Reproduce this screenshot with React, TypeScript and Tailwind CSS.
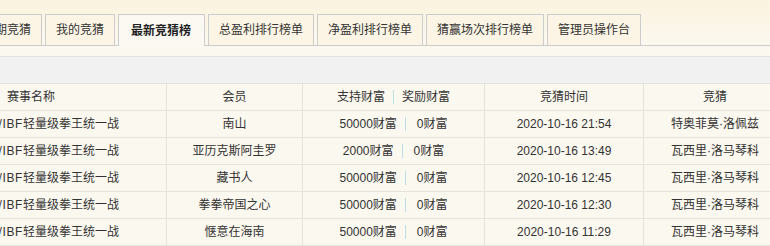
import React from 'react';

const tabs = [
  { label: '往期竞猜', active: false },
  { label: '我的竞猜', active: false },
  { label: '最新竞猜榜', active: true },
  { label: '总盈利排行榜单', active: false },
  { label: '净盈利排行榜单', active: false },
  { label: '猜赢场次排行榜单', active: false },
  { label: '管理员操作台', active: false },
];

const rows = [
  { member: '南山', support: '50000财富', reward: '0财富', time: '2020-10-16 21:54', pick: '特奥菲莫·洛佩兹' },
  { member: '亚历克斯阿圭罗', support: '2000财富', reward: '0财富', time: '2020-10-16 13:49', pick: '瓦西里·洛马琴科' },
  { member: '藏书人', support: '50000财富', reward: '0财富', time: '2020-10-16 12:45', pick: '瓦西里·洛马琴科' },
  { member: '拳拳帝国之心', support: '50000财富', reward: '0财富', time: '2020-10-16 12:30', pick: '瓦西里·洛马琴科' },
  { member: '惬意在海南', support: '50000财富', reward: '0财富', time: '2020-10-16 11:29', pick: '瓦西里·洛马琴科' },
];

const cell = 'h-[27px] border-r border-b border-[#e6e3d8] flex items-center justify-center whitespace-nowrap overflow-hidden';

function Bar({ wide }: { wide?: boolean }) {
  return (
    <span
      className={`inline-block w-px h-[14px] bg-[#bcdfe3] ml-[8px] ${wide ? 'mr-[11px]' : 'mr-[8px]'}`}
    />
  );
}

export default function App() {
  return (
    <div className="w-[770px] h-[246px] overflow-hidden bg-[#fbf8ef] text-[12px] text-[#333] font-['Liberation_Sans','Noto_Sans_CJK_SC',sans-serif] leading-none">
      {/* tabs */}
      <div className="h-[46px] pt-[14px] border-b border-[#cccccc] bg-[linear-gradient(180deg,#fbf3df_0%,#fbf8ef_100%)] flex items-start">
        <div className="flex gap-[3px] -ml-[28px]">
          {tabs.map((t) =>
            t.active ? (
              <div
                key={t.label}
                className="h-[32px] pl-[12px] pr-[13px] border border-b-0 border-[#cccccc] bg-[#fbf9f2] flex items-center font-bold text-[#222] relative z-10"
              >
                {t.label}
              </div>
            ) : (
              <div
                key={t.label}
                className="h-[31px] px-[10px] border border-b-0 border-[#cccccc] bg-[#fcf5e5] flex items-center"
              >
                {t.label}
              </div>
            )
          )}
        </div>
      </div>

      <div className="h-[10px]" />

      {/* toolbar band */}
      <div className="h-[28px] border-t border-b border-[#e2e2e2] bg-[#f1f1f1]" />

      {/* table */}
      <div className="grid grid-cols-[167px_136px_182px_159px_143px] w-[787px]">
        <div className={`${cell} !justify-start pl-[7px]`}>赛事名称</div>
        <div className={cell}>会员</div>
        <div className={cell}>
          支持财富
          <Bar />
          奖励财富
        </div>
        <div className={cell}>竞猜时间</div>
        <div className={cell}>竞猜</div>

        {rows.map((r, i) => (
          <React.Fragment key={i}>
            <div className={`${cell} !justify-end pr-[47px]`}>
              <span className="tracking-[0.6px]">WBA/WBO/IBF</span>轻量级拳王统一战
            </div>
            <div className={cell}>{r.member}</div>
            <div className={cell}>
              {r.support}
              <Bar wide />
              {r.reward}
            </div>
            <div className={cell}>{r.time}</div>
            <div className={cell}>{r.pick}</div>
          </React.Fragment>
        ))}
      </div>
    </div>
  );
}
